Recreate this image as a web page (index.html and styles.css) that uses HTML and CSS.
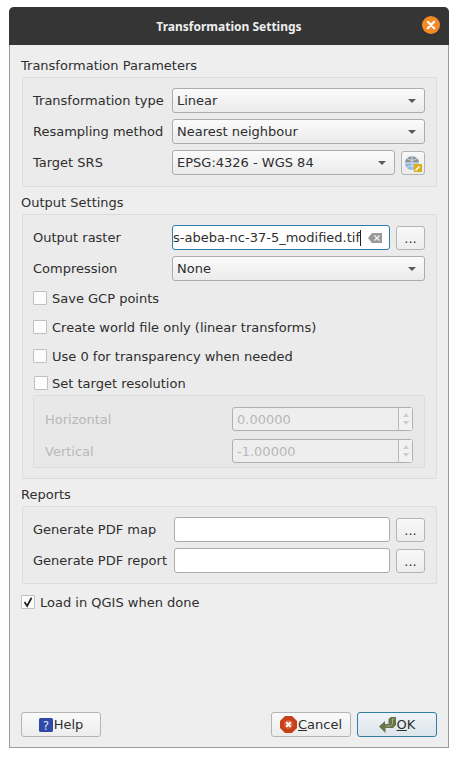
FILE: index.html
```html
<!DOCTYPE html>
<html>
	<head>
		<meta charset="UTF-8">
		<title>Transformation Settings</title>
		<link rel="stylesheet" href="styles.css">
	</head>
	<body>
		<div class="window">
			<div class="titlebar">
				<span class="title">Transformation Settings</span>
				<span class="close">
					<svg width="18" height="18" viewBox="0 0 18 18"><circle cx="9" cy="9" r="9" fill="#f28a26"/><path d="M5.800 5.800l6.400 6.400M12.200 5.800l-6.400 6.400" stroke="#fff" stroke-width="2.200" stroke-linecap="round"/></svg>
				</span>
			</div>
			<div class="content">
				<div class="group-title">Transformation Parameters</div>
				<div class="group group-params">
					<div class="row">
						<label class="lbl">Transformation type</label>
						<div class="combo"><span>Linear</span><i class="arrow"></i></div>
					</div>
					<div class="row">
						<label class="lbl">Resampling method</label>
						<div class="combo"><span>Nearest neighbour</span><i class="arrow"></i></div>
					</div>
					<div class="row">
						<label class="lbl">Target SRS</label>
						<div class="combo"><span>EPSG:4326 - WGS 84</span><i class="arrow"></i></div>
						<div class="tool-btn">
							<svg width="18" height="18" viewBox="0 0 18 18">
								<circle cx="8" cy="9" r="7" fill="#8fb4d6"/>
								<path d="M2 5.500Q8 0 14 5.500L15 8H1z" fill="#8d9192"/>
								<path d="M1 9h14M8 2v14M3 4.500Q8 8 13 4.500M3 13.500Q8 10 13 13.500" stroke="#e6eef4" stroke-width=".8" fill="none"/>
								<rect x="10" y="10" width="8" height="8" fill="#dcae1d"/>
								<path d="M11.500 16.500l4-4" stroke="#fff" stroke-width="1.400"/>
							</svg>
						</div>
					</div>
				</div>

				<div class="group-title">Output Settings</div>
				<div class="group group-output">
					<div class="row">
						<label class="lbl">Output raster</label>
						<div class="edit edit-focus">
							<span class="edit-text">s-abeba-nc-37-5_modified.tif</span>
							<i class="caret"></i>
							<svg class="clear" width="14" height="10" viewBox="0 0 14 10"><path d="M4 0h10v10H4L0 5z" fill="#9a9a9a"/><path d="M6.500 2.500l5 5M11.500 2.500l-5 5" stroke="#eee" stroke-width="1.500"/></svg>
						</div>
						<div class="dots-btn">...</div>
					</div>
					<div class="row">
						<label class="lbl">Compression</label>
						<div class="combo"><span>None</span><i class="arrow"></i></div>
					</div>
					<div class="check-list">
						<div class="check"><i class="box"></i>Save GCP points</div>
						<div class="check"><i class="box"></i>Create world file only (linear transforms)</div>
						<div class="check"><i class="box"></i>Use 0 for transparency when needed</div>
						<div class="check check-res"><i class="box"></i>Set target resolution</div>
					</div>
					<div class="group group-res">
						<div class="row row-res">
							<label class="lbl-off">Horizontal</label>
							<div class="spin"><span class="spin-val">0.00000</span><div class="spin-btns"><i class="up"></i><i class="down"></i></div></div>
						</div>
						<div class="row row-res">
							<label class="lbl-off">Vertical</label>
							<div class="spin"><span class="spin-val">-1.00000</span><div class="spin-btns"><i class="up"></i><i class="down"></i></div></div>
						</div>
					</div>
				</div>

				<div class="group-title">Reports</div>
				<div class="group group-reports">
					<div class="row">
						<label class="lbl">Generate PDF map</label>
						<div class="edit edit-short"></div>
						<div class="dots-btn">...</div>
					</div>
					<div class="row">
						<label class="lbl">Generate PDF report</label>
						<div class="edit edit-short"></div>
						<div class="dots-btn">...</div>
					</div>
				</div>

				<div class="check check-load">
					<i class="box box-on"><svg width="12" height="12" viewBox="0 0 12 12"><path d="M2.500 6l2.600 4L9.600 1.800" stroke="#222" stroke-width="1.800" fill="none"/></svg></i>Load in QGIS when done
				</div>

				<div class="buttons">
					<div class="btn">
						<svg width="14" height="14" viewBox="0 0 14 14"><rect width="14" height="14" rx="1.500" fill="#3048a8"/><text x="7" y="11.500" text-anchor="middle" class="help-mark">?</text></svg>
						<span>Help</span>
					</div>
					<div class="spacer"></div>
					<div class="btn">
						<svg width="17" height="17" viewBox="0 0 17 17"><path d="M5 0h7l5 5v7l-5 5H5l-5-5V5z" fill="#c8401a"/><circle cx="8.500" cy="8.500" r="4.600" fill="#d9603c"/><path d="M6.300 6.300l4.400 4.400M10.700 6.300l-4.400 4.400" stroke="#fff" stroke-width="2"/></svg>
						<span><u>C</u>ancel</span>
					</div>
					<div class="btn btn-default">
						<svg width="17" height="16" viewBox="0 0 17 16"><path d="M0 9.500L6 4v3h3.500V2L12 0h5v8l-3 3H6.500v5z" fill="#69734a"/><path d="M6.500 9h5l2-2V2h2" stroke="#a4ad84" fill="none"/></svg>
						<span><u>O</u>K</span>
					</div>
				</div>
			</div>
		</div>
	</body>
</html>
```

FILE: styles.css
```css
* {
	box-sizing: border-box;
}
html, body {
	margin: 0;
	background: #fff;
}
body {
	padding: 7px 9px 9px 9px;
	font-family: "DejaVu Sans", sans-serif;
	font-size: 13px;
	color: #2e2e2e;
}
.window {
	width: 440px;
	height: 741px;
	display: flex;
	flex-direction: column;
	background: #eee;
	border: 1px solid #9c9c9c;
	border-top: none;
	border-radius: 5px 5px 0 0;
}
.titlebar {
	height: 38px;
	margin: 0 -1px;
	flex: none;
	display: flex;
	align-items: center;
	justify-content: center;
	position: relative;
	background: #353535;
	border-radius: 5px 5px 0 0;
}
.title {
	color: #eee;
	font-family: "Noto Sans", sans-serif;
	font-weight: bold;
	font-size: 12px;
}
.close {
	position: absolute;
	right: 9px;
	top: 9px;
	width: 18px;
	height: 18px;
}
.close svg {
	display: block;
}
.content {
	flex: 1;
	display: flex;
	flex-direction: column;
	padding: 12px 11px 10px 11px;
}
.group-title {
	height: 20px;
	line-height: 18px;
}
.group {
	border: 1px solid #dcdcdc;
	border-radius: 2px;
	background: #ebebeb;
	margin-left: 1px;
}
.group-params {
	height: 110px;
	padding: 10px 11px 10px 10px;
	margin-bottom: 7px;
}
.group-output {
	height: 265px;
	padding: 10px 11px 10px 10px;
	margin-bottom: 7px;
}
.group-reports {
	height: 78px;
	padding: 10px 11px 10px 10px;
	margin-bottom: 8px;
}
.row {
	display: flex;
	align-items: center;
	height: 25px;
	margin-bottom: 6px;
}
.lbl {
	width: 139px;
	flex: none;
}
.combo {
	flex: 1;
	height: 25px;
	display: flex;
	align-items: center;
	justify-content: space-between;
	padding: 0 8px 0 4px;
	background: linear-gradient(#fbfbfb, #ebebeb);
	border: 1px solid #acacac;
	border-radius: 3px;
}
.arrow {
	width: 0;
	height: 0;
	border-left: 4px solid transparent;
	border-right: 4px solid transparent;
	border-top: 4px solid #5a5a5a;
}
.tool-btn {
	width: 24px;
	height: 24px;
	margin-left: 6px;
	flex: none;
	display: flex;
	align-items: center;
	justify-content: center;
	background: linear-gradient(#f8f8f8, #ebebeb);
	border: 1px solid #b4b4b4;
	border-radius: 3px;
}
.edit {
	width: 218px;
	height: 25px;
	flex: none;
	display: flex;
	align-items: center;
	background: #fff;
	border: 1px solid #acacac;
	border-radius: 3px;
	position: relative;
}
.edit-short {
	margin-left: 2px;
	width: 216px;
}
.edit-focus {
	border-color: #2f7ea6;
	overflow: hidden;
}
.edit-text {
	white-space: nowrap;
}
.caret {
	width: 1px;
	height: 16px;
	background: #222;
}
.clear {
	position: absolute;
	right: 7px;
	top: 7px;
}
.dots-btn {
	width: 29px;
	height: 24px;
	margin-left: 6px;
	flex: none;
	text-align: center;
	line-height: 24px;
	background: linear-gradient(#f8f8f8, #ededed);
	border: 1px solid #b4b4b4;
	border-radius: 3px;
}
.check-list {
	margin-top: 7px;
}
.check {
	height: 20px;
	display: flex;
	align-items: center;
	margin-bottom: 9px;
}
.check-res {
	margin-top: -2px;
	margin-bottom: 2px;
	padding-left: 1px;
}
.check-res .box {
	margin-right: 4px;
}
.box {
	width: 14px;
	height: 14px;
	flex: none;
	margin-right: 5px;
	background: #fcfcfc;
	border: 1px solid #c0c0c0;
	border-radius: 1px;
	display: flex;
	align-items: center;
	justify-content: center;
}
.group-res {
	height: 73px;
	margin-left: 0;
	padding: 11px 11px 0 11px;
	background: #e8e8e8;
}
.row-res {
	height: 24px;
	margin-bottom: 8px;
}
.lbl-off {
	width: 187px;
	flex: none;
	color: #b8b8b8;
}
.spin {
	width: 181px;
	height: 24px;
	flex: none;
	display: flex;
	align-items: center;
	justify-content: space-between;
	background: #eee;
	border: 1px solid #b0b0b0;
	border-radius: 3px;
}
.spin-val {
	color: #b8b8b8;
	padding-left: 4px;
}
.spin-btns {
	width: 14px;
	height: 22px;
	border-left: 1px solid #b8b8b8;
	display: flex;
	flex-direction: column;
	align-items: center;
	justify-content: space-around;
	padding: 3px 0;
	background: #f2f2f2;
}
.up {
	border-left: 3px solid transparent;
	border-right: 3px solid transparent;
	border-bottom: 4px solid #ccc;
}
.down {
	border-left: 3px solid transparent;
	border-right: 3px solid transparent;
	border-top: 4px solid #ccc;
}
.check-load {
	margin-bottom: 0;
	height: 20px;
}
.help-mark {
	fill: #dfe4f5;
	font-family: "DejaVu Sans", sans-serif;
	font-size: 12px;
}
.buttons {
	margin-top: auto;
	display: flex;
	align-items: center;
	gap: 6px;
}
.spacer {
	flex: 1;
}
.btn {
	width: 80px;
	height: 25px;
	display: flex;
	align-items: center;
	justify-content: center;
	gap: 1px;
	background: linear-gradient(#fafafa, #ededed);
	border: 1px solid #b4b4b4;
	border-radius: 3px;
}
.btn-default {
	background: linear-gradient(#eef3f7, #dde6ec);
	border-color: #2f7ea6;
}
```
